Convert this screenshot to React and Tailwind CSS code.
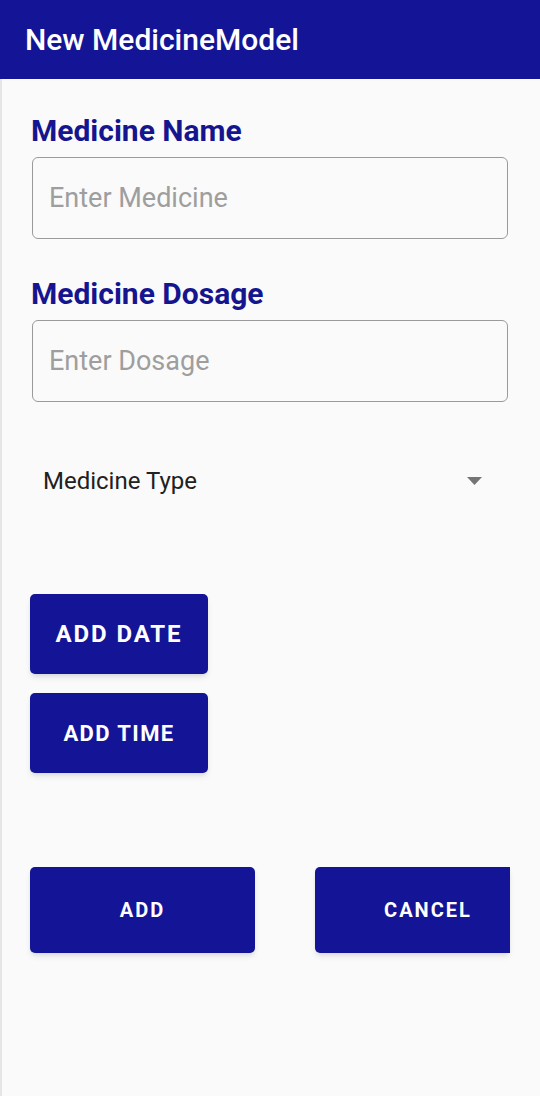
export default function App() {
  const font = { fontFamily: 'Roboto, "Noto Sans", sans-serif' };
  return (
    <div className="w-[540px] h-[1096px] bg-[#fafafa] flex flex-col overflow-hidden" style={font}>
      <div className="h-[79px] bg-[#141497] flex items-center pl-[25px] shrink-0">
        <span className="text-white text-[30px] font-medium leading-none">New MedicineModel</span>
      </div>
      <div className="flex-1 border-l-2 border-[#e6e6e6] flex flex-col">
        <div className="pl-[28px] pr-[30px] pt-[37px] flex flex-col">
          <div className="pl-[1px] text-[#15158f] text-[30px] font-bold leading-none">Medicine Name</div>
          <div className="mt-[11px] mx-[2px] h-[82px] border-[1.5px] border-[#9a9a9a] rounded-[6px] flex items-center pl-[16px]">
            <span className="text-[#9e9e9e] text-[27px]">Enter Medicine</span>
          </div>
          <div className="mt-[40px] pl-[1px] text-[#15158f] text-[30px] font-bold leading-none">Medicine Dosage</div>
          <div className="mt-[11px] mx-[2px] h-[82px] border-[1.5px] border-[#9a9a9a] rounded-[6px] flex items-center pl-[16px]">
            <span className="text-[#9e9e9e] text-[27px]">Enter Dosage</span>
          </div>
          <div className="mt-[61px] flex items-center justify-between pl-[13px] pr-[28px] h-[36px]">
            <span className="text-[#212121] text-[24px]">Medicine Type</span>
            <svg width="15" height="8" viewBox="0 0 15 8"><path d="M0 0 L15 0 L7.5 8 Z" fill="#757575" /></svg>
          </div>
          <div className="mt-[95px] flex flex-col gap-[19px]">
            <button className="w-[178px] h-[80px] bg-[#141497] rounded-[5px] shadow-md text-white font-bold text-[24px] tracking-[1.9px]">ADD DATE</button>
            <button className="w-[178px] h-[80px] bg-[#141497] rounded-[5px] shadow-md text-white font-bold text-[22px] tracking-[1.4px]">ADD TIME</button>
          </div>
          <div className="mt-[94px] flex gap-[60px]">
            <button className="w-[225px] h-[86px] bg-[#141497] rounded-[5px] shadow-md text-white font-bold text-[20px] tracking-[2px]">ADD</button>
            <button className="w-[195px] h-[86px] bg-[#141497] rounded-l-[5px] shadow-md text-white font-bold text-[20px] tracking-[2px] pl-[31px]">CANCEL</button>
          </div>
        </div>
      </div>
    </div>
  );
}
